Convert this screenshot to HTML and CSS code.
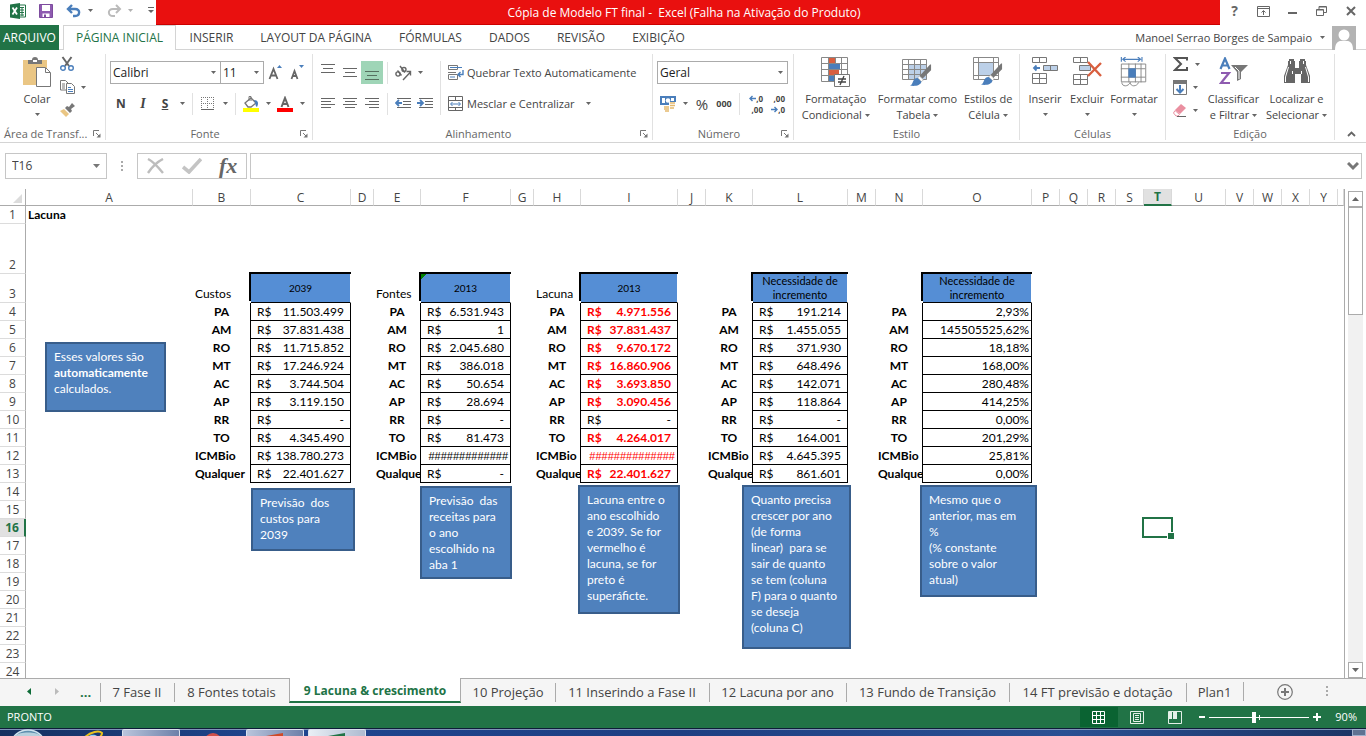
FILE: index.html
```html
<!DOCTYPE html>
<html lang="pt-BR">
<head>
<meta charset="utf-8">
<title>Cópia de Modelo FT final - Excel</title>
<link rel="stylesheet" href="styles.css">
</head>
<body>
<svg class="defs" aria-hidden="true">
  <symbol id="caret" viewBox="0 0 5 3"><path d="M0 0h5L2.500 3z" fill="#666"/></symbol>
  <symbol id="launcher" viewBox="0 0 8 8"><path d="M.5 6V.5H6M3 3l3 3" fill="none" stroke="#777"/><path d="M7.500 3.500v4h-4z" fill="#777"/></symbol>
  <symbol id="brush" viewBox="0 0 24 24"><path d="M23 1v6l-9 9-3-3L22 1z" fill="#777"/><path d="M11 13l4 4-2 2-4-4z" fill="#fff" stroke="#999" stroke-width=".6"/><path d="M9 15l4 4c-1 4-7 5-12 4 4-1 2-8 8-8z" fill="#4a7ebb"/></symbol>
</svg>
<div class="app">
  <header class="title-bar">
    <div class="quick">
      <svg class="xl" width="16" height="16" viewBox="0 0 16 16"><path d="M9 2h6.500v12H9z" fill="#fff" stroke="#217346"/><path d="M10 4.500h4M10 7h4M10 9.500h4M10 12h4M12 4v9" stroke="#217346"/><path d="M0 1.500L10 0v16L0 14.500z" fill="#217346"/><path d="M2.500 4.500l4.500 7M7 4.500l-4.500 7" stroke="#fff" stroke-width="1.800"/></svg>
      <button class="q" aria-label="Salvar"><svg width="14" height="14" viewBox="0 0 14 14"><path d="M.5.500h13v13H.5z" fill="#8e5bb0" stroke="#7d4b9e"/><path d="M3 1h8v6H3zM3.500 9.500h7V13h-7z" fill="#fff"/><path d="M5 10.500h2V13H5z" fill="#7d4b9e"/></svg></button>
      <button class="q" aria-label="Desfazer"><svg width="16" height="14" viewBox="0 0 16 14"><path d="M2 5h7c6 0 5 7 0 7H7M6 1L2 5l4 4" fill="none" stroke="#4a7ebb" stroke-width="2.400"/></svg><svg class="caret"><use href="#caret"/></svg></button>
      <button class="q dim" aria-label="Refazer"><svg width="16" height="14" viewBox="0 0 16 14"><path d="M14 5H7C1 5 2 12 7 12h2M10 1l4 4-4 4" fill="none" stroke="#bbb" stroke-width="2"/></svg><svg class="caret"><use href="#caret"/></svg></button>
      <button class="q last" aria-label="Personalizar"><svg width="6" height="7" viewBox="0 0 6 7"><path d="M0 .5h6" stroke="#666"/><path d="M0 3h6L3 6z" fill="#666"/></svg></button>
    </div>
    <h1>Cópia de Modelo FT final -&nbsp; Excel (Falha na Ativação do Produto)</h1>
    <div class="win">
      <button aria-label="Ajuda">?</button>
      <button aria-label="Opções da faixa"><svg width="13" height="11" viewBox="0 0 13 11"><path d="M.5.500h12v10H.5zM.5 2.500h12M6.500 9V5M4.500 6.500l2-2 2 2" fill="none" stroke="#666"/></svg></button>
      <button aria-label="Minimizar"><svg width="10" height="10" viewBox="0 0 10 10"><path d="M0 7h9" stroke="#666" stroke-width="2"/></svg></button>
      <button aria-label="Restaurar"><svg width="11" height="10" viewBox="0 0 11 10"><path d="M.5 3.500h7v6h-7zM.5 4h7M3 3V.5h7.500v6H8M3 1h7" fill="none" stroke="#666"/></svg></button>
      <button aria-label="Fechar"><svg width="10" height="10" viewBox="0 0 10 10"><path d="M1 1l8 8M9 1L1 9" stroke="#666" stroke-width="2"/></svg></button>
    </div>
  </header>

  <nav class="tabs">
    <button class="file">ARQUIVO</button>
    <button class="on">PÁGINA INICIAL</button>
    <button>INSERIR</button>
    <button>LAYOUT DA PÁGINA</button>
    <button>FÓRMULAS</button>
    <button>DADOS</button>
    <button>REVISÃO</button>
    <button>EXIBIÇÃO</button>
    <div class="user"><button>Manoel Serrao Borges de Sampaio<svg class="caret"><use href="#caret"/></svg></button>
      <svg width="24" height="24" viewBox="0 0 24 24"><path d="M0 0h24v24H0z" fill="#b3b3b3"/><circle cx="12" cy="9" r="5.500" fill="#fff"/><path d="M3 24c0-7 3-9 6-9h6c3 0 6 2 6 9z" fill="#fff"/></svg></div>
  </nav>

  <section class="ribbon">
    <div class="group g-clip">
      <div class="body big">
        <button class="large"><svg width="30" height="30" viewBox="0 0 30 30"><path d="M1 3h24v25H1z" fill="#eac684"/><path d="M6 7V3h4a3 3 0 0 1 6 0h4v4z" fill="#777"/><path d="M11 3h4v2h-4z" fill="#fff"/><path d="M14.500 10.500h9l5 5v14h-14z" fill="#fff" stroke="#777"/><path d="M23.500 11v4.500H28" fill="none" stroke="#777"/></svg><span>Colar</span><svg class="caret"><use href="#caret"/></svg></button>
        <div class="stack">
          <button aria-label="Recortar"><svg width="14" height="16" viewBox="0 0 14 16"><path d="M2.500 1L9 10M11.500 1L5 10" stroke="#666" stroke-width="2"/><circle cx="3" cy="12" r="2.300" fill="none" stroke="#4a7ebb" stroke-width="1.400"/><circle cx="11" cy="12" r="2.300" fill="none" stroke="#4a7ebb" stroke-width="1.400"/></svg></button>
          <button aria-label="Copiar"><svg width="15" height="14" viewBox="0 0 15 14"><path d="M.5.500h5l3 3V10h-8zM2 4h3M2 6h3M2 8h3" fill="#fff" stroke="#777"/><path d="M6.500 3.500h5l3 3v7h-8z" fill="#fff" stroke="#777"/><path d="M8 7.500h3M8 9.500h5M8 11.500h5" stroke="#4a7ebb"/></svg><svg class="caret"><use href="#caret"/></svg></button>
          <button aria-label="Pincel de Formatação"><svg width="16" height="14" viewBox="0 0 16 14"><path d="M12 0l3 3-4 3 1 2-2 2-5-5 2-2 2 1z" fill="#777"/><path d="M4 6l5 5-3 3-6-6z" fill="#eac684"/></svg></button>
        </div>
      </div>
      <div class="label"><span>Área de Transf...</span><svg class="launch"><use href="#launcher"/></svg></div>
    </div>

    <div class="group g-font">
      <div class="body rows">
        <div class="row">
          <label class="combo c-font"><select aria-label="Fonte"><option>Calibri</option></select><svg class="caret"><use href="#caret"/></svg></label>
          <label class="combo c-size"><select aria-label="Tamanho"><option>11</option></select><svg class="caret"><use href="#caret"/></svg></label>
          <button class="tool" aria-label="Aumentar fonte"><svg width="16" height="16" viewBox="0 0 16 16"><path d="M2.500 14l4-10 4 10M4 10.500h5" fill="none" stroke="#666" stroke-width="1.800"/><path d="M10 3l2.500-3L15 3z" fill="#4a7ebb"/></svg></button>
          <button class="tool" aria-label="Diminuir fonte"><svg width="16" height="16" viewBox="0 0 16 16"><path d="M2.500 14l3-8 3 8M4 11h3.500" fill="none" stroke="#666" stroke-width="1.800"/><path d="M10 0h5l-2.500 3z" fill="#4a7ebb"/></svg></button>
        </div>
        <div class="row">
          <button class="tool glyph"><b>N</b></button>
          <button class="tool glyph serif"><i>I</i></button>
          <button class="tool glyph"><u>S</u></button>
          <button class="drop" aria-label="Mais sublinhado"><svg class="caret"><use href="#caret"/></svg></button>
          <i class="sep"></i>
          <button class="tool" aria-label="Bordas"><svg width="14" height="14" viewBox="0 0 14 14"><path d="M.5 0v13M6.500 0v13M12.500 0v13M0 .5h13M0 6.500h13" stroke="#777" stroke-dasharray="1 1"/><path d="M0 12.500h13" stroke="#666"/></svg></button>
          <button class="drop" aria-label="Mais bordas"><svg class="caret"><use href="#caret"/></svg></button>
          <i class="sep"></i>
          <button class="tool" aria-label="Cor de preenchimento"><svg width="16" height="16" viewBox="0 0 16 16"><path d="M2 7l6-5 5 5-5 4H5z" fill="#fff" stroke="#777" stroke-width="1.300"/><path d="M6 5V.5h2V5" fill="none" stroke="#777"/><path d="M11 4c4 0 5 3 3 7-2-1-1-4-3-7z" fill="#4a7ebb"/><path d="M0 12h16v4H0z" fill="#ff0"/></svg></button>
          <button class="drop" aria-label="Mais cores"><svg class="caret"><use href="#caret"/></svg></button>
          <button class="tool" aria-label="Cor da fonte"><svg width="16" height="16" viewBox="0 0 16 16"><path d="M4.500 11L8 2l3.500 9M5.500 8h5" fill="none" stroke="#666" stroke-width="2"/><path d="M0 12h16v4H0z" fill="red"/></svg></button>
          <button class="drop" aria-label="Mais cores da fonte"><svg class="caret"><use href="#caret"/></svg></button>
        </div>
      </div>
      <div class="label"><span>Fonte</span><svg class="launch"><use href="#launcher"/></svg></div>
    </div>

    <div class="group g-align">
      <div class="body cols">
        <div class="rows">
          <div class="row">
            <button class="tool up" aria-label="Alinhar acima"><svg width="14" height="9" viewBox="0 0 14 9"><path d="M0 .5h14M2 4.500h10M0 8.500h14" stroke="#666"/></svg></button>
            <button class="tool" aria-label="Alinhar no meio"><svg width="14" height="9" viewBox="0 0 14 9"><path d="M0 .5h14M2 4.500h10M0 8.500h14" stroke="#666"/></svg></button>
            <button class="tool down on" aria-label="Alinhar abaixo"><svg width="14" height="9" viewBox="0 0 14 9"><path d="M0 .5h14M2 4.500h10M0 8.500h14" stroke="#55705f"/></svg></button>
            <i class="sep"></i>
            <button class="tool" aria-label="Orientação"><svg width="17" height="16" viewBox="0 0 17 16"><g fill="none" stroke="#666" stroke-width="1.400"><circle cx="3" cy="9" r="2.100"/><path d="M2.500 5.500l4 5M5 1l5 6.500"/><circle cx="9" cy="4.500" r="2"/></g><path d="M8 15l7.500-8M11.500 6.500H15.500V10.500" fill="none" stroke="#666" stroke-width="1.400"/></svg></button>
            <button class="drop" aria-label="Mais orientação"><svg class="caret"><use href="#caret"/></svg></button>
          </div>
          <div class="row">
            <button class="tool" aria-label="À esquerda"><svg width="14" height="11" viewBox="0 0 14 11"><path d="M0 .5h14M0 3.500h10M0 6.500h14M0 9.500h10" stroke="#666"/></svg></button>
            <button class="tool" aria-label="Centralizar"><svg width="14" height="11" viewBox="0 0 14 11"><path d="M0 .5h14M2 3.500h10M0 6.500h14M2 9.500h10" stroke="#666"/></svg></button>
            <button class="tool" aria-label="À direita"><svg width="14" height="11" viewBox="0 0 14 11"><path d="M0 .5h14M4 3.500h10M0 6.500h14M4 9.500h10" stroke="#666"/></svg></button>
            <i class="sep"></i>
            <button class="tool" aria-label="Diminuir recuo"><svg width="16" height="11" viewBox="0 0 16 11"><path d="M2 .5h14M8 3.500h8M8 6.500h8M2 9.500h14" stroke="#666"/><path d="M7 5H1M4 2L1 5l3 3" fill="none" stroke="#4a7ebb" stroke-width="1.800"/></svg></button>
            <button class="tool" aria-label="Aumentar recuo"><svg width="16" height="11" viewBox="0 0 16 11"><path d="M2 .5h14M8 3.500h8M8 6.500h8M2 9.500h14" stroke="#666"/><path d="M0 5h6M3 2l3 3-3 3" fill="none" stroke="#4a7ebb" stroke-width="1.800"/></svg></button>
          </div>
        </div>
        <i class="sep tall"></i>
        <div class="rows">
          <button class="row text"><svg width="16" height="16" viewBox="0 0 16 16"><path d="M.5 0v4.500h9V.5H0M0 7.500h8M.5 14V9.500h9M.5 14.500h9V10" fill="none" stroke="#777"/><path d="M2 2.500h12M2 12h5" stroke="#4a7ebb"/><path d="M15 5v4.500H10M12.500 7L10 9.500l2.500 2.500" fill="none" stroke="#4a7ebb" stroke-width="1.400"/></svg><span>Quebrar Texto Automaticamente</span></button>
          <button class="row text"><svg width="16" height="16" viewBox="0 0 16 16"><path d="M.5.500h14v14H.5zM.5 4.500h14M.5 11.500h14M7.500 1v3M7.500 12v3" fill="none" stroke="#666"/><path d="M3 8h9M4.500 6L2.500 8l2 2M10.500 6l2 2-2 2" fill="none" stroke="#4a7ebb"/></svg><span>Mesclar e Centralizar</span><svg class="caret"><use href="#caret"/></svg></button>
        </div>
      </div>
      <div class="label"><span>Alinhamento</span><svg class="launch"><use href="#launcher"/></svg></div>
    </div>

    <div class="group g-num">
      <div class="body rows">
        <div class="row"><label class="combo c-num"><select aria-label="Formato"><option>Geral</option></select><svg class="caret"><use href="#caret"/></svg></label></div>
        <div class="row">
          <button class="tool" aria-label="Formato contábil"><svg width="16" height="16" viewBox="0 0 16 16"><path d="M0 0h16v9H0z" fill="#4a7ebb"/><path d="M2 2h3v5H2zM11 2h3v3h-3z" fill="#fff"/><circle cx="8" cy="4.500" r="2.300" fill="#fff"/><path d="M9 6h7v8H9zM4 9h7v7H4z" fill="#fff"/><path d="M10 7h5M10 9.500h5M10 12h4M4 11h5M4 13h5M5 15h4" stroke="#e5b96d" stroke-width="1.600"/></svg></button>
          <button class="drop" aria-label="Mais formatos"><svg class="caret"><use href="#caret"/></svg></button>
          <button class="tool pct">%</button>
          <button class="tool mini">000</button>
          <i class="sep"></i>
          <button class="tool dec" aria-label="Aumentar casas"><span><svg width="7" height="7" viewBox="0 0 7 7"><path d="M7 3.500H1M3.500 1L1 3.500 3.500 6" fill="none" stroke="#4a7ebb" stroke-width="1.400"/></svg>,0</span><span>,00</span></button>
          <button class="tool dec" aria-label="Diminuir casas"><span>,00</span><span><svg width="7" height="7" viewBox="0 0 7 7"><path d="M0 3.500h6M3.500 1L6 3.500 3.500 6" fill="none" stroke="#4a7ebb" stroke-width="1.400"/></svg>,0</span></button>
        </div>
      </div>
      <div class="label"><span>Número</span><svg class="launch"><use href="#launcher"/></svg></div>
    </div>

    <div class="group g-style">
      <div class="body big">
        <button class="large"><svg width="30" height="30" viewBox="0 0 30 30"><path d="M.5.500h26v24H.5zM7.500 0v24M14.500 0v24M20.500 0v24M0 6.500h26M0 12.500h26M0 18.500h26" fill="none" stroke="#888"/><path d="M8 1h6v5H8zM8 13h10v5H8z" fill="#d95f3f"/><path d="M8 7h11v5H8zM8 19h5v5H8z" fill="#4a7ebb"/><path d="M13.500 17.500h15v12h-15z" fill="#fff" stroke="#777"/><path d="M17 22h8M17 25h8M23 19l-4 9" stroke="#444" stroke-width="1.300"/></svg><span>Formatação<br>Condicional<svg class="caret"><use href="#caret"/></svg></span></button>
        <button class="large"><svg width="30" height="30" viewBox="0 0 30 30"><path d="M7 8h18v15H7z" fill="#bcd0e8"/><path d="M.5 2.500h24v20H.5zM6.500 2v20M12.500 2v20M18.500 2v20M0 7.500h24M0 12.500h24M0 17.500h24" fill="none" stroke="#888"/><use href="#brush" x="7" y="6" width="23" height="24"/></svg><span>Formatar como<br>Tabela<svg class="caret"><use href="#caret"/></svg></span></button>
        <button class="large"><svg width="30" height="30" viewBox="0 0 30 30"><path d="M.5.500h25v22H.5zM5.500 0v22M20.500 0v22M0 5.500h25M0 18.500h25" fill="none" stroke="#888"/><path d="M6 6h14v12H6z" fill="#bcd0e8"/><use href="#brush" x="7" y="5" width="23" height="24"/></svg><span>Estilos de<br>Célula<svg class="caret"><use href="#caret"/></svg></span></button>
      </div>
      <div class="label"><span>Estilo</span></div>
    </div>

    <div class="group g-cells">
      <div class="body big">
        <button class="large"><svg width="28" height="30" viewBox="0 0 28 30"><path d="M1.500.500h14v5h-14zM8.500 0v5M1.500 16.500h14v10h-14zM8.500 16v10M1.500 21.500h14" fill="none" stroke="#777"/><path d="M12.500 8.500h14v5h-14zM19.500 8v5" fill="#bcd0e8" stroke="#777"/><path d="M9 11H3M5.500 8.500L3 11l2.500 2.500" fill="none" stroke="#4a7ebb" stroke-width="1.800"/></svg><span>Inserir</span><svg class="caret"><use href="#caret"/></svg></button>
        <button class="large"><svg width="30" height="30" viewBox="0 0 30 30"><path d="M1.500.500h14v5h-14zM8.500 0v5M1.500 17.500h14v10h-14zM8.500 17v10M1.500 22.500h14" fill="none" stroke="#777"/><path d="M7.500 8.500h11v5h-11z" fill="#bcd0e8" stroke="#777"/><path d="M16 5l13 14M29 6L16 19" stroke="#d95f3f" stroke-width="2.400"/></svg><span>Excluir</span><svg class="caret"><use href="#caret"/></svg></button>
        <button class="large"><svg width="28" height="32" viewBox="0 0 28 32"><path d="M.5 0v5M22.500 0v5M2 2.500h19M5 0L2 2.500 5 5M18 0l3 2.500L18 5" fill="none" stroke="#4a7ebb" stroke-width="1.200"/><path d="M.5 7.500h26v19H.5zM8.500 7v20M15.500 7v20M21.500 7v20M0 12.500h26M0 21.500h26M1 27c0 5 7 5 9 0 0 5 7 5 9 0" fill="none" stroke="#888"/><path d="M8 12h8v10H8z" fill="#4a7ebb"/></svg><span>Formatar</span><svg class="caret"><use href="#caret"/></svg></button>
      </div>
      <div class="label"><span>Células</span></div>
    </div>

    <div class="group g-edit">
      <div class="body big">
        <div class="stack">
          <button aria-label="Soma"><svg width="16" height="14" viewBox="0 0 16 14"><path d="M14 3.500V1H2l6 6-6 6h12v-3" fill="none" stroke="#555" stroke-width="2"/></svg><svg class="caret"><use href="#caret"/></svg></button>
          <button aria-label="Preencher"><svg width="14" height="15" viewBox="0 0 14 15"><path d="M.5.500h13v14H.5z" fill="#fff" stroke="#777"/><path d="M0 0h14v4H0z" fill="#777"/><path d="M7 5v7M3.500 9L7 12.500 10.500 9" fill="none" stroke="#4a7ebb" stroke-width="2"/></svg><svg class="caret"><use href="#caret"/></svg></button>
          <button aria-label="Limpar"><svg width="14" height="13" viewBox="0 0 14 13"><path d="M8 0l5 4-6 6-5-4z" fill="#ea8fa0"/><path d="M2 6.500l4.500 4L5 12H3L.5 9z" fill="#fff" stroke="#ea8fa0"/><path d="M4 12.500h9" stroke="#666"/></svg><svg class="caret"><use href="#caret"/></svg></button>
        </div>
        <button class="large"><svg width="30" height="30" viewBox="0 0 30 30"><path d="M1.500 12L6 1.500 10.500 12M3.500 8.500h5" fill="none" stroke="#4a7ebb" stroke-width="2.200"/><path d="M2 16h8L2 26h9" fill="none" stroke="#8e5bb0" stroke-width="2.200"/><path d="M12 8h17l-7 7v7l-4 2v-9z" fill="#777"/><path d="M16 10l4 4v8" fill="none" stroke="#fff"/></svg><span>Classificar<br>e Filtrar<svg class="caret"><use href="#caret"/></svg></span></button>
        <button class="large"><svg width="28" height="28" viewBox="0 0 28 28"><path d="M5 3h1V1h5v2h1v7h4V3h1V1h5v2h1v4l4 11v7h-9v-9h-6v9H1v-7L5 7z" fill="#666"/><path d="M7.500 3v3M20.500 3v3M5.500 9l-3 10v5M22.500 9l3 10v5M9.500 13v3M18.500 13v3" stroke="#fff" fill="none"/></svg><span>Localizar e<br>Selecionar<svg class="caret"><use href="#caret"/></svg></span></button>
      </div>
      <div class="label"><span>Edição</span></div>
    </div>
    <button class="collapse" aria-label="Recolher"><svg width="9" height="6" viewBox="0 0 9 6"><path d="M1 5l3.500-3.500L8 5" fill="none" stroke="#666" stroke-width="1.800"/></svg></button>
  </section>

  <section class="formula">
    <label class="namebox"><input value="T16" aria-label="Caixa de nome"><svg width="7" height="4" viewBox="0 0 7 4"><path d="M0 0h7L3.500 4z" fill="#777"/></svg></label>
    <svg class="dots" width="2" height="11" viewBox="0 0 2 11"><path d="M0 0h2v2H0zM0 4h2v2H0zM0 8h2v2H0z" fill="#aaa"/></svg>
    <div class="fbtns">
      <button aria-label="Cancelar"><svg width="18" height="16" viewBox="0 0 18 16"><path d="M1 1c6 3 10 8 15 14M16 1C10 4 5 9 1 15" fill="none" stroke="#bdbdbd" stroke-width="2.400"/></svg></button>
      <button aria-label="Inserir"><svg width="20" height="16" viewBox="0 0 20 16"><path d="M1 9l6 5L19 1" fill="none" stroke="#c4c4c4" stroke-width="3.600"/></svg></button>
      <button class="fx"><i>fx</i></button>
    </div>
    <label class="fbar"><input aria-label="Fórmula"><svg width="12" height="9" viewBox="0 0 12 9"><path d="M1 1l5 5 5-5" fill="none" stroke="#777" stroke-width="3"/></svg></label>
  </section>

  <main class="sheet">
    <div class="grid">
      <table>
        <colgroup><col class="w26"><col class="w167"><col class="w58"><col class="w100"><col class="w23"><col class="w47"><col class="w90"><col class="w23"><col class="w47"><col class="w97"><col class="w28"><col class="w47"><col class="w95"><col class="w28"><col class="w47"><col class="w109"><col class="w28"><col class="w28"><col class="w28"><col class="w28"><col class="w28"><col class="w54"><col class="w28"><col class="w28"><col class="w28"><col class="w28"><col></colgroup>
        <thead><tr><th class="corner"><svg width="9" height="9" viewBox="0 0 9 9"><path d="M9 0v9H0z" fill="#dcdcdc"/></svg></th><th>A</th><th>B</th><th>C</th><th>D</th><th>E</th><th>F</th><th>G</th><th>H</th><th>I</th><th>J</th><th>K</th><th>L</th><th>M</th><th>N</th><th>O</th><th>P</th><th>Q</th><th>R</th><th>S</th><th class="sel">T</th><th>U</th><th>V</th><th>W</th><th>X</th><th>Y</th><th></th></tr></thead>
        <tbody>
        <tr><th>1</th><td class="b">Lacuna</td><td colspan="25"></td></tr>
        <tr class="r2"><th>2</th><td colspan="26"></td></tr>
        <tr class="r3"><th>3</th><td></td><td>Custos</td><td class="head">2039</td><td></td><td>Fontes</td><td class="head note">2013</td><td></td><td>Lacuna</td><td class="head">2013</td><td></td><td></td><td class="head wide">Necessidade de incremento</td><td></td><td></td><td class="head wide">Necessidade de<br>incremento</td><td colspan="11"></td></tr>
        <tr><th>4</th><td></td><td class="k">PA</td><td class="v"><span>R$</span>11.503.499</td><td></td><td class="k">PA</td><td class="v"><span>R$</span>6.531.943</td><td></td><td class="k">PA</td><td class="v red"><span>R$</span>4.971.556</td><td></td><td class="k">PA</td><td class="v"><span>R$</span>191.214</td><td></td><td class="k">PA</td><td class="v p">2,93%</td><td colspan="11"></td></tr>
        <tr><th>5</th><td></td><td class="k">AM</td><td class="v"><span>R$</span>37.831.438</td><td></td><td class="k">AM</td><td class="v"><span>R$</span>1</td><td></td><td class="k">AM</td><td class="v red"><span>R$</span>37.831.437</td><td></td><td class="k">AM</td><td class="v"><span>R$</span>1.455.055</td><td></td><td class="k">AM</td><td class="v p">145505525,62%</td><td colspan="11"></td></tr>
        <tr><th>6</th><td></td><td class="k">RO</td><td class="v"><span>R$</span>11.715.852</td><td></td><td class="k">RO</td><td class="v"><span>R$</span>2.045.680</td><td></td><td class="k">RO</td><td class="v red"><span>R$</span>9.670.172</td><td></td><td class="k">RO</td><td class="v"><span>R$</span>371.930</td><td></td><td class="k">RO</td><td class="v p">18,18%</td><td colspan="11"></td></tr>
        <tr><th>7</th><td></td><td class="k">MT</td><td class="v"><span>R$</span>17.246.924</td><td></td><td class="k">MT</td><td class="v"><span>R$</span>386.018</td><td></td><td class="k">MT</td><td class="v red"><span>R$</span>16.860.906</td><td></td><td class="k">MT</td><td class="v"><span>R$</span>648.496</td><td></td><td class="k">MT</td><td class="v p">168,00%</td><td colspan="11"></td></tr>
        <tr><th>8</th><td></td><td class="k">AC</td><td class="v"><span>R$</span>3.744.504</td><td></td><td class="k">AC</td><td class="v"><span>R$</span>50.654</td><td></td><td class="k">AC</td><td class="v red"><span>R$</span>3.693.850</td><td></td><td class="k">AC</td><td class="v"><span>R$</span>142.071</td><td></td><td class="k">AC</td><td class="v p">280,48%</td><td colspan="11"></td></tr>
        <tr><th>9</th><td></td><td class="k">AP</td><td class="v"><span>R$</span>3.119.150</td><td></td><td class="k">AP</td><td class="v"><span>R$</span>28.694</td><td></td><td class="k">AP</td><td class="v red"><span>R$</span>3.090.456</td><td></td><td class="k">AP</td><td class="v"><span>R$</span>118.864</td><td></td><td class="k">AP</td><td class="v p">414,25%</td><td colspan="11"></td></tr>
        <tr><th>10</th><td></td><td class="k">RR</td><td class="v"><span>R$</span>-</td><td></td><td class="k">RR</td><td class="v"><span>R$</span>-</td><td></td><td class="k">RR</td><td class="v"><span>R$</span>-</td><td></td><td class="k">RR</td><td class="v"><span>R$</span>-</td><td></td><td class="k">RR</td><td class="v p">0,00%</td><td colspan="11"></td></tr>
        <tr><th>11</th><td></td><td class="k">TO</td><td class="v"><span>R$</span>4.345.490</td><td></td><td class="k">TO</td><td class="v"><span>R$</span>81.473</td><td></td><td class="k">TO</td><td class="v red"><span>R$</span>4.264.017</td><td></td><td class="k">TO</td><td class="v"><span>R$</span>164.001</td><td></td><td class="k">TO</td><td class="v p">201,29%</td><td colspan="11"></td></tr>
        <tr><th>12</th><td></td><td class="k l">ICMBio</td><td class="v"><span>R$</span>138.780.273</td><td></td><td class="k l">ICMBio</td><td class="v p hash">#############</td><td></td><td class="k l">ICMBio</td><td class="v p red hash">##############</td><td></td><td class="k l">ICMBio</td><td class="v"><span>R$</span>4.645.395</td><td></td><td class="k l">ICMBio</td><td class="v p">25,81%</td><td colspan="11"></td></tr>
        <tr><th>13</th><td></td><td class="k l">Qualquer</td><td class="v"><span>R$</span>22.401.627</td><td></td><td class="k l">Qualque</td><td class="v"><span>R$</span>-</td><td></td><td class="k l">Qualque</td><td class="v red"><span>R$</span>22.401.627</td><td></td><td class="k l">Qualque</td><td class="v"><span>R$</span>861.601</td><td></td><td class="k l">Qualque</td><td class="v p">0,00%</td><td colspan="11"></td></tr>
        <tr><th>14</th><td colspan="26"></td></tr>
        <tr><th>15</th><td colspan="26"></td></tr>
        <tr><th class="sel">16</th><td colspan="26"></td></tr>
        <tr><th>17</th><td colspan="26"></td></tr>
        <tr><th>18</th><td colspan="26"></td></tr>
        <tr><th>19</th><td colspan="26"></td></tr>
        <tr><th>20</th><td colspan="26"></td></tr>
        <tr><th>21</th><td colspan="26"></td></tr>
        <tr><th>22</th><td colspan="26"></td></tr>
        <tr><th>23</th><td colspan="26"></td></tr>
        <tr><th>24</th><td colspan="26"></td></tr>
        </tbody>
      </table>
      <div class="callout n1">Esses valores são<br><b>automaticamente</b><br>calculados.</div>
      <div class="callout n2">Previsão&nbsp; dos<br>custos para<br>2039</div>
      <div class="callout n3">Previsão&nbsp; das<br>receitas para<br>o ano<br>escolhido na<br>aba 1</div>
      <div class="callout n4">Lacuna entre o<br>ano escolhido<br>e 2039. Se for<br>vermelho é<br>lacuna, se for<br>preto é<br>superáficte.</div>
      <div class="callout n5">Quanto precisa<br>crescer por ano<br>(de forma<br>linear)&nbsp; para se<br>sair de quanto<br>se tem (coluna<br>F) para o quanto<br>se deseja<br>(coluna C)</div>
      <div class="callout n6">Mesmo que o<br>anterior, mas em<br>%<br>(% constante<br>sobre o valor<br>atual)</div>
      <div class="cursor"></div>
    </div>
    <div class="scroll">
      <button aria-label="Para cima"><svg width="7" height="4" viewBox="0 0 7 4"><path d="M0 4h7L3.500 0z" fill="#666"/></svg></button>
      <div class="track"><div class="thumb"></div></div>
      <button aria-label="Para baixo"><svg width="7" height="4" viewBox="0 0 7 4"><path d="M0 0h7L3.500 4z" fill="#666"/></svg></button>
    </div>
  </main>

  <nav class="sheets">
    <div class="arrows">
      <button aria-label="Anterior"><svg width="4" height="7" viewBox="0 0 4 7"><path d="M4 0v7L0 3.500z" fill="#0d6b37"/></svg></button>
      <button aria-label="Próxima"><svg width="4" height="7" viewBox="0 0 4 7"><path d="M0 0v7l4-3.500z" fill="#bbb"/></svg></button>
      <button class="more">...</button>
    </div>
    <button>7 Fase II</button>
    <button>8 Fontes totais</button>
    <button class="on">9 Lacuna &amp; crescimento</button>
    <button>10 Projeção</button>
    <button>11 Inserindo a Fase II</button>
    <button>12 Lacuna por ano</button>
    <button>13 Fundo de Transição</button>
    <button>14 FT previsão e dotação</button>
    <button>Plan1</button>
    <div class="extra">
      <button aria-label="Nova planilha"><svg width="16" height="16" viewBox="0 0 16 16"><circle cx="8" cy="8" r="7.300" fill="none" stroke="#777" stroke-width="1.200"/><path d="M4 8h8M8 4v8" stroke="#777" stroke-width="2"/></svg></button>
      <svg width="2" height="11" viewBox="0 0 2 11"><path d="M0 0h2v2H0zM0 4h2v2H0zM0 8h2v2H0z" fill="#aaa"/></svg>
    </div>
  </nav>

  <footer class="status">
    <span class="ready">PRONTO</span>
    <button class="view on" aria-label="Normal"><svg width="14" height="13" viewBox="0 0 14 13"><path d="M.5.500h12v12H.5zM4.500 0v13M8.500 0v13M0 4.500h13M0 8.500h13" fill="none" stroke="#fff"/></svg></button>
    <button class="view" aria-label="Layout da página"><svg width="14" height="13" viewBox="0 0 14 13"><path d="M.5.500h13v12H.5zM3.500 2.500h7v8h-7zM5 4.500h4M5 6.500h4M5 8.500h4" fill="none" stroke="#e4f0e8"/></svg></button>
    <button class="view" aria-label="Quebra de página"><svg width="14" height="13" viewBox="0 0 14 13"><path d="M.5.500h13v12H.5z" fill="none" stroke="#e4f0e8"/><path d="M1 1h3v7H1zM5 1h4v7H5z" fill="#e4f0e8"/></svg></button>
    <button class="zoom" aria-label="Menos"><svg width="8" height="8" viewBox="0 0 8 8"><path d="M1 4h6" stroke="#fff" stroke-width="2"/></svg></button>
    <input class="slider" type="range" min="0" max="100" value="45" aria-label="Zoom">
    <button class="zoom" aria-label="Mais"><svg width="8" height="8" viewBox="0 0 8 8"><path d="M0 4h8M4 0v8" stroke="#fff" stroke-width="2"/></svg></button>
    <span class="pct">90%</span>
  </footer>

  <div class="taskbar" aria-hidden="true">
    <svg class="start" width="122" height="8" viewBox="0 0 122 8"><ellipse cx="28" cy="14" rx="16" ry="13" fill="#5d8fae" stroke="#cfe3ee" stroke-width="1.500"/><path d="M14 8c4-6 24-6 28 0z" fill="#b6d0dd"/><path d="M85 8c6-5 14-7 17-4 0 1-1 3-2 4" fill="none" stroke="#e9c21e" stroke-width="2"/><path d="M88 8c2-3 8-3 10 0z" fill="#8ecff2"/></svg>
    <div class="task"><svg width="14" height="8" viewBox="0 0 14 8"><path d="M0 6h12v2H0z" fill="#d6b160"/></svg></div>
    <div class="task bare"><svg width="20" height="8" viewBox="0 0 20 8"><circle cx="10" cy="12" r="9" fill="#d0504a"/></svg></div>
    <div class="task"><svg width="18" height="8" viewBox="0 0 18 8"><path d="M0 6l17-3v5H0z" fill="#cf4a28"/></svg></div>
    <div class="task lit"><svg width="18" height="8" viewBox="0 0 18 8"><path d="M0 6l17-3v5H0z" fill="#217346"/></svg></div>
    <div class="desk"></div>
  </div>
</div>
</body>
</html>
```
FILE: styles.css
```css
* { box-sizing: border-box; }
body { margin: 0; background: #fff; color: #444; font: 12px/16px "Open Sans", "Noto Sans", sans-serif; }
button, input, select { font: inherit; color: inherit; background: none; border: 0; padding: 0; margin: 0; border-radius: 0; }
svg { display: block; flex: none; }
.defs { position: absolute; width: 0; height: 0; }
.caret { width: 5px; height: 3px; }
.app { display: flex; flex-direction: column; height: 100vh; overflow: hidden; }

/* title bar */
.title-bar { display: flex; height: 25px; flex: none; }
.quick { width: 156px; display: flex; align-items: center; padding: 0 2px 4px 10px; gap: 13px; }
.q { display: flex; align-items: center; gap: 6px; }
.q.last { margin-left: auto; }
.dim .caret { opacity: .5; }
.title-bar h1 { flex: 1; margin: 0; background: #e9100f; border-bottom: 1px solid #c00; color: #fff; font: 12px/25px "Open Sans", sans-serif; text-align: center; padding-right: 8px; }
.win { width: 146px; display: flex; align-items: center; padding-bottom: 3px; }
.win button { width: 29px; height: 22px; display: flex; align-items: center; justify-content: center; font: bold 14px/22px "Open Sans", sans-serif; color: #666; }

/* ribbon tabs */
.tabs { display: grid; grid-template-columns: 63px 113px 71px 138px 91px 67px 76px 79px 1fr; height: 25px; flex: none; border-bottom: 1px solid #d4d4d4; }
.tabs > button { white-space: nowrap; height: 25px; line-height: 25px; text-align: center; }
.tabs .file { background: #217346; color: #fff; width: 59px; }
.tabs .on { background: #fff; color: #217346; border: 1px solid #d4d4d4; border-bottom: 0; line-height: 24px; }
.user { display: flex; justify-content: flex-end; align-items: center; padding-right: 10px; gap: 7px; }
.user button { display: flex; align-items: center; gap: 8px; font-size: 11px; line-height: 24px; }

/* ribbon */
.ribbon { display: flex; height: 93px; flex: none; border-bottom: 1px solid #d4d4d4; padding: 4px 0 2px; font-size: 11px; }
.group { display: flex; flex-direction: column; justify-content: space-between; border-right: 1px solid #e1e1e1; padding: 0 4px; }
.g-clip { width: 106px; }
.g-font { width: 207px; }
.g-align { width: 340px; }
.g-num { width: 141px; }
.g-style { width: 226px; }
.g-cells { width: 146px; }
.g-edit { width: 169px; }
.label { display: flex; height: 12px; line-height: 12px; color: #666; white-space: nowrap; }
.label span { flex: 1; text-align: center; }
.launch { width: 8px; height: 8px; margin-top: 2px; }
.g-clip .label span { text-align: left; }
.rows { display: flex; flex-direction: column; gap: 8px; }
.body.rows, .body.cols { padding-top: 7px; }
.body.cols { display: flex; }
.row { display: flex; height: 23px; align-items: center; }
.row.text { padding-left: 3px; gap: 3px; white-space: nowrap; }
.row.text .caret { margin-left: 8px; }
.combo { position: relative; height: 23px; border: 1px solid #ababab; display: flex; color: #222; font-size: 12px; }
.combo select { appearance: none; width: 100%; padding: 0 2px; outline: 0; }
.combo .caret { position: absolute; right: 4px; top: 9px; }
.c-font { width: 111px; }
.c-size { width: 44px; margin-left: -1px; }
.c-num { width: 131px; }
.tool { width: 22px; height: 23px; display: flex; align-items: center; justify-content: center; }
.tool.up { align-items: flex-start; padding-top: 3px; }
.tool.down { align-items: flex-end; padding-bottom: 4px; }
.tool.on { background: #9fd5b7; }
.drop { width: 12px; height: 23px; display: flex; align-items: center; justify-content: center; }
.sep { width: 1px; height: 22px; background: #e1e1e1; margin: 0 4px; }
.sep.tall { height: 54px; }
.glyph { font-size: 12px; }
.glyph b, .glyph u { font-weight: bold; }
.glyph.serif { font: bold 14px/16px "Liberation Serif", serif; }
.tool.pct { font-size: 15px; }
.tool.mini { font-size: 9px; font-weight: bold; }
.dec { flex-direction: column; align-items: flex-end; padding-right: 3px; font: bold 8px/11px "Open Sans", sans-serif; }
.dec span { display: flex; align-items: center; height: 11px; }
.body.big { display: flex; }
.large { display: flex; flex-direction: column; align-items: center; padding-top: 3px; line-height: 16px; white-space: nowrap; }
.large > svg:first-child { height: 30px; margin-bottom: 4px; }
.large > .caret { margin-top: 6px; }
.large span .caret { display: inline-block; vertical-align: 2px; margin-left: 3px; }
.g-clip .body { padding-left: 18px; }
.stack { display: flex; flex-direction: column; gap: 7px; padding: 2px 0 0 8px; }
.stack button { height: 16px; display: flex; align-items: center; gap: 6px; }
.g-style .large:nth-child(1) { width: 76px; }
.g-style .large:nth-child(2) { width: 88px; }
.g-style .large:nth-child(3) { width: 54px; }
.g-cells .large { width: 42px; }
.g-cells .large:last-child { width: 52px; }
.g-edit .stack { padding-left: 3px; width: 32px; }
.g-edit .large { width: 63px; }
.collapse { margin: auto 0 2px auto; width: 30px; display: flex; justify-content: center; padding-bottom: 1px; }

/* formula bar */
.formula { display: flex; align-items: center; height: 46px; flex: none; padding: 0 4px 0 5px; }
.namebox, .fbtns, .fbar { height: 26px; border: 1px solid #c6c6c6; display: flex; align-items: center; }
.namebox { width: 102px; padding: 0 6px; }
.namebox input { flex: 1; min-width: 0; }
.dots { margin: 0 14px; }
.fbtns { width: 110px; padding-left: 9px; gap: 17px; }
.fx { font: bold 22px/22px "Liberation Serif", serif; color: #666; }
.fbar { flex: 1; margin-left: 3px; padding-right: 2px; }
.fbar input { flex: 1; outline: 0; }

/* worksheet */
.sheet { flex: 1; min-height: 0; display: flex; }
.grid { position: relative; flex: 1; min-width: 0; overflow: hidden; border-right: 1px solid #ababab; }
table { table-layout: fixed; width: 100%; border-spacing: 0; font: 12px/14px Lato, "Open Sans", sans-serif; color: #000; }
.w26 { width: 26px; } .w167 { width: 167px; } .w58 { width: 58px; } .w100 { width: 100px; } .w23 { width: 23px; }
.w47 { width: 47px; } .w90 { width: 90px; } .w97 { width: 97px; } .w28 { width: 28px; } .w95 { width: 95px; }
.w109 { width: 109px; } .w54 { width: 54px; }
th, td { padding: 0 2px; height: 18px; overflow: hidden; white-space: nowrap; }
th { font: 12px/16px "Open Sans", sans-serif; color: #444; padding: 0; }
thead th { height: 17px; line-height: 15px; border-right: 1px solid #d9d9d9; border-bottom: 1px solid #ababab; }
thead th.corner { border-right-color: #ababab; }
.corner svg { margin: 3px 3px 0 auto; }
thead th.sel { background: #e1e1e1; color: #217346; font-weight: bold; border-bottom: 2px solid #217346; }
tbody th { border-right: 1px solid #ababab; border-bottom: 1px solid #dcdcdc; vertical-align: bottom; }
tbody th.sel { background: #e1e1e1; color: #217346; font-weight: bold; border-right: 2px solid #217346; }
td { text-align: left; }
.b { font-weight: bold; }
.r2 > * { height: 50px; }
.r3 > * { height: 29px; vertical-align: bottom; }
.r3 > td { padding-bottom: 2px; }
td.head { background: #558ed5; background-clip: padding-box; border-right: 1px solid #fff; border-bottom: 1px solid #000; box-shadow: -2px -2px 0 #000, 0 -2px 0 #000; vertical-align: middle; text-align: center; font-size: 10px; line-height: 14px; padding: 0 2px; white-space: normal; overflow: visible; }
td.wide { font-size: 11px; }
td.note { background-image: linear-gradient(135deg, #008000 4px, transparent 4px); }
td.k { font-weight: bold; text-align: center; border-right: 1px solid #000; }
td.l { text-align: left; padding-right: 0; text-overflow: clip; }
td.v { text-align: right; padding: 0 6px; border-right: 1px solid #000; border-bottom: 1px solid #000; }
td.v span { float: left; }
td.p { padding: 0 2px; }
td.red { color: red; font-weight: bold; }
td.hash { font: 11px/14px "Liberation Sans", sans-serif; }

.callout { position: absolute; background: #4f81bd; border: 2px solid #385d8a; color: #fff; padding: 5px 0 0 7px; font: 12px/16px Lato, "Open Sans", sans-serif; white-space: nowrap; }
.n1 { left: 45px; top: 153px; width: 121px; height: 70px; }
.n2 { left: 251px; top: 299px; width: 104px; height: 63px; }
.n3 { left: 420px; top: 297px; width: 92px; height: 93px; }
.n4 { left: 578px; top: 296px; width: 102px; height: 129px; }
.n5 { left: 742px; top: 296px; width: 109px; height: 164px; }
.n6 { left: 920px; top: 296px; width: 117px; height: 112px; }
.cursor { position: absolute; left: 1142px; top: 328px; width: 31px; height: 21px; border: 2px solid #217346; }
.cursor::after { content: ""; position: absolute; right: -3px; bottom: -3px; width: 6px; height: 6px; background: #217346; border: solid #fff; border-width: 1px 0 0 1px; }

.scroll { width: 21px; padding: 2px 3px 0; display: flex; flex-direction: column; }
.scroll button { width: 15px; height: 16px; border: 1px solid #ababab; background: #fff; display: flex; align-items: center; justify-content: center; }
.track { flex: 1; background: #f1f1f1; width: 15px; }
.thumb { height: 108px; background: #fff; border: 1px solid #ababab; }

/* sheet tabs */
.sheets { display: grid; grid-template-columns: 100px 74px 115px 172px 94px 154px 137px 163px 177px 57px 1fr; height: 28px; flex: none; background: #f5f5f5; border-top: 1px solid #ababab; font-size: 13px; }
.sheets > button { position: relative; height: 27px; line-height: 24px; padding-bottom: 2px; white-space: nowrap; text-align: center; }
.sheets > button:not(.on)::before { content: ""; position: absolute; left: 0; top: 4px; height: 19px; border-left: 1px solid #ababab; }
.sheets > button.on { background: #fff; color: #217346; font-weight: bold; font-size: 12px; height: 25px; line-height: 26px; padding: 0; margin-top: -1px; border: solid #ababab; border-width: 0 1px; border-bottom: 2px solid #217346; }
.sheets > button.on + button::before { display: none; }
.arrows { display: flex; align-items: center; padding: 0 0 2px 27px; }
.arrows button { width: 28px; display: flex; }
.arrows .more { color: #217346; font-weight: bold; padding-left: 0; width: 17px; margin-left: -3px; }
.extra { display: flex; align-items: center; justify-content: space-between; padding: 0 38px 2px 0; }
.extra::before { content: ""; height: 19px; border-left: 1px solid #ababab; }
.extra button { margin: 0 auto 0 33px; }

/* status bar */
.status { display: flex; align-items: center; height: 22px; flex: none; background: #217346; color: #fff; padding: 0 9px 0 7px; font-size: 11px; }
.ready { flex: 1; }
.view { width: 38px; height: 20px; display: flex; align-items: center; justify-content: center; }
.view.on { background: #0a6332; }
.zoom { width: 8px; height: 20px; display: flex; align-items: center; }
.view + .zoom { margin-left: 4px; }
.slider { appearance: none; width: 100px; height: 11px; margin: 0 4px 0 3px; background: linear-gradient(#fff, #fff) 50% 50% / 1px 5px no-repeat, linear-gradient(#fff, #fff) 0 50% / 100% 1px no-repeat; }
.slider::-webkit-slider-thumb { appearance: none; width: 4px; height: 11px; background: #fff; }
.status .pct { width: 36px; text-align: right; }

/* taskbar */
.taskbar { height: 8px; flex: none; display: flex; overflow: hidden; background: linear-gradient(90deg, #15305f, #1f4690 20%, #1e3f82 50%, #2a5093 78%, #1b3463); border-top: 1px solid #0e1c38; box-shadow: inset 0 1px 0 #7f93b8; }
.task { width: 58px; margin-right: 4px; border: 1px solid #dbe3ee; border-bottom: 0; border-radius: 2px 2px 0 0; background: linear-gradient(90deg, #b9c5dc, #6d80a9); display: flex; justify-content: center; }
.task.bare { border-color: transparent; background: none; }
.task.lit { background: linear-gradient(90deg, #e9eff5, #aebbd1); }
.desk { margin-left: auto; width: 14px; border: 1px solid #9fb0cc; background: #5f7292; }
```
